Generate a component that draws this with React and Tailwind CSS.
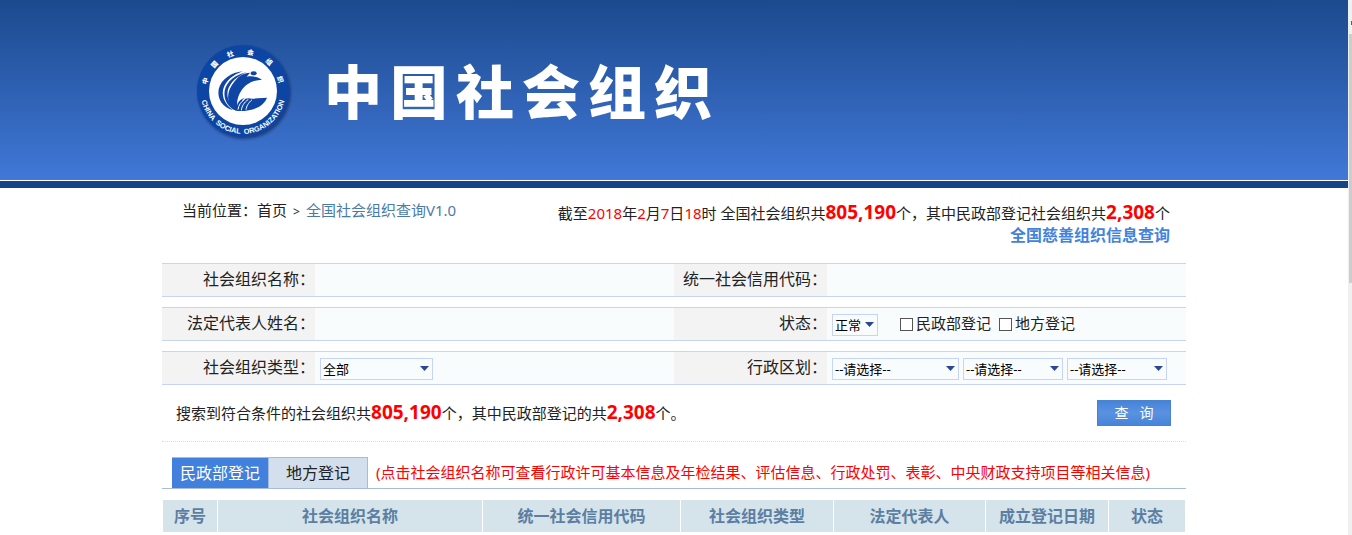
import { useState } from "react";

const columns = [
  { title: "序号", width: "w-[54px]" },
  { title: "社会组织名称", width: "w-[264px]" },
  { title: "统一社会信用代码", width: "w-[197px]" },
  { title: "社会组织类型", width: "w-[152px]" },
  { title: "法定代表人", width: "w-[151px]" },
  { title: "成立登记日期", width: "w-[122px]" },
  { title: "状态", width: "w-[76px]" },
];

const ringChars = [
  { char: "中", angle: -75 },
  { char: "国", angle: -47 },
  { char: "社", angle: -19 },
  { char: "会", angle: 11 },
  { char: "组", angle: 42 },
  { char: "织", angle: 73 },
];

const Logo = () => (
  <svg viewBox="0 0 300 300" className="size-[100px] shrink-0" role="img" aria-label="中国社会组织">
    <defs>
      <path id="ring" d="M16 120 A127 127 0 1 0 266 120" />
      <filter id="shadow" x="-10%" y="-10%" width="125%" height="125%">
        <feDropShadow dx="4" dy="5" stdDeviation="4" floodColor="#0b2350" floodOpacity="0.7" />
      </filter>
    </defs>
    <circle cx="141" cy="141" r="138" fill="#0f45a4" filter="url(#shadow)" />
    <circle cx="141" cy="141" r="102" fill="#fff" />
    {ringChars.map(({ char, angle }) => (
      <text
        key={char}
        x="141"
        y="31"
        fontSize="20"
        textAnchor="middle"
        fill="#fff"
        transform={`rotate(${angle} 141 141)`}
        className="font-black"
      >
        {char}
      </text>
    ))}
    <text fontSize="22" fill="#fff" textAnchor="middle" fontFamily="Liberation Sans, sans-serif" className="font-bold">
      <textPath href="#ring" startOffset="50%">
        CHINA&#8194;SOCIAL&#8194;ORGANIZATION
      </textPath>
    </text>
    <g fill="#0f45a4">
      <ellipse cx="173" cy="88" rx="9" ry="6" />
      {/* dolphin */}
      <path d="M198 107 C180 96 166 96 152 98 L162 86 C142 86 126 98 116 112 C98 134 90 158 102 182 C108 194 116 200 126 201 C118 172 128 144 150 124 C164 112 180 108 198 107 Z" />
      {/* waves */}
      <path d="M140 82 C106 85 75 106 68 136 C63 166 80 191 112 199 C90 184 77 162 81 138 C88 110 112 92 140 82 Z" />
      <path d="M153 84 C118 92 92 112 86 140 C82 167 96 191 122 201 C102 184 91 162 95 140 C102 114 124 96 153 84 Z" />
      <path d="M124 201 C118 184 128 166 147 161 C141 165 139 168 138 171 C150 160 160 162 168 164 L213 161 C204 184 176 203 124 201 Z" />
    </g>
    <g fill="none" stroke="#fff" strokeWidth="3">
      <path d="M126 197 C128 183 134 174 146 166" />
      <path d="M136 199 C138 185 144 176 157 166" />
      <path d="M150 197 C152 186 156 178 168 167" />
    </g>
  </svg>
);

const Select = ({ label, options, className }) => (
  <span className={`relative inline-flex h-[22px] ${className}`}>
    <select
      aria-label={label}
      className="w-full appearance-none border border-[#c6d5f3] bg-[#f8fcfd] pl-0.5 text-[13px] leading-5 text-black"
    >
      {options.map((option) => (
        <option key={option}>{option}</option>
      ))}
    </select>
    <svg viewBox="0 0 9 5" className="pointer-events-none absolute top-2 right-1 h-[5px] w-[9px]" aria-hidden="true">
      <path d="M0 0H9L4.5 5Z" fill="#2b4697" />
    </svg>
  </span>
);

const Row = ({ children }) => (
  <div className="grid h-[34px] grid-cols-[153fr_359fr_153fr_359fr] border-y border-[#c6d5f3] bg-[#f8fcfd]">
    {children}
  </div>
);

const Label = ({ htmlFor, children }) => (
  <label htmlFor={htmlFor} className="bg-[#f3f3f3] text-right text-base leading-[30px] whitespace-nowrap">
    {children}
  </label>
);

const Check = ({ children }) => (
  <label className="flex items-center gap-[3px] leading-[30px]">
    <input type="checkbox" className="mt-0.5 size-[13px] appearance-none border border-[#555] bg-white checked:bg-[#4180dc]" />
    {children}
  </label>
);

const Count = ({ children }) => <b className="text-[19px] leading-none text-[#f00]">{children}</b>;

const Red = ({ children }) => <span className="text-[#f00]">{children}</span>;

const App = () => {
  const [tab, setTab] = useState("部");

  const tabClass = (name) =>
    name === tab ? "bg-[#4180dc] text-white" : "bg-[#d3dfed] text-[#222]";

  return (
    <div
      lang="zh-CN"
      className="flex min-h-screen bg-white font-['Noto_Sans','Noto_Sans_CJK_SC',sans-serif] text-[15px] text-[#222]"
    >
      <div className="min-w-0 flex-1">
        <header className="border-b-[7px] border-[#154588]">
          <div className="h-[181px] border-b border-white bg-linear-to-b from-[#1c4a8e] to-[#4178d8]">
            <div className="mx-auto flex max-w-[1024px] items-start pt-11 pl-[34px]">
              <Logo />
              <h1 className="mt-2 ml-7 flex gap-2 text-[58px] leading-[80px] font-black text-white">
                {[..."中国社会组织"].map((char) => (
                  <span key={char}>{char}</span>
                ))}
              </h1>
            </div>
          </div>
        </header>

        <main className="mx-auto max-w-[1024px]">
          <div className="flex justify-between pt-[11px] pr-4 pl-5">
            <nav className="leading-[22px]">
              当前位置：<a href="#home">首页</a>
              <span className="mx-1.5 text-xs">&gt;</span>
              <a href="#search" className="text-[#4a7ba8]">全国社会组织查询V1.0</a>
            </nav>
            <div className="pt-[3px] text-right leading-[22px]">
              <p>
                截至<Red>2018</Red>年<Red>2</Red>月<Red>7</Red>日<Red>18</Red>时 全国社会组织共
                <Count>805,190</Count>个，其中民政部登记社会组织共<Count>2,308</Count>个
              </p>
              <a href="#charity" className="block text-base leading-[22px] font-bold text-[#4283dc]">
                全国慈善组织信息查询
              </a>
            </div>
          </div>

          <form onSubmit={(e) => e.preventDefault()}>
            <div className="mt-[17px] flex flex-col gap-2.5">
              <Row>
                <Label htmlFor="name">社会组织名称：</Label>
                <input id="name" type="text" className="min-w-0 px-1 outline-none" />
                <Label htmlFor="code">统一社会信用代码：</Label>
                <input id="code" type="text" className="min-w-0 px-1 outline-none" />
              </Row>
              <Row>
                <Label htmlFor="person">法定代表人姓名：</Label>
                <input id="person" type="text" className="min-w-0 px-1 outline-none" />
                <Label>状态：</Label>
                <div className="flex items-start pl-[5px]">
                  <Select label="状态" options={["正常", "撤销", "注销"]} className="mt-1.5 mr-[22px] w-[46px]" />
                  <div className="flex gap-2">
                    <Check>民政部登记</Check>
                    <Check>地方登记</Check>
                  </div>
                </div>
              </Row>
              <Row>
                <Label>社会组织类型：</Label>
                <div className="flex pt-1.5 pl-[5px]">
                  <Select label="社会组织类型" options={["全部", "社会团体", "基金会"]} className="w-[113px]" />
                </div>
                <Label>行政区划：</Label>
                <div className="flex gap-1 pt-1.5 pl-[5px]">
                  <Select label="省" options={["--请选择--"]} className="w-[127px]" />
                  <Select label="市" options={["--请选择--"]} className="w-[100px]" />
                  <Select label="区县" options={["--请选择--"]} className="w-[100px]" />
                </div>
              </Row>
            </div>

            <div className="flex items-start justify-between border-b border-dotted border-[#ddd] pt-[15px] pr-[15px] pb-[15px] pl-3.5">
              <p className="leading-[26px]">
                搜索到符合条件的社会组织共<Count>805,190</Count>个，其中民政部登记的共<Count>2,308</Count>个。
              </p>
              <button
                type="submit"
                className="h-[26px] w-[74px] border border-[#4a82cc] bg-linear-to-b from-[#4584da] via-[#5a92df] to-[#4584da] text-sm leading-[22px] text-white"
              >
                查&nbsp;&nbsp;&nbsp;询
              </button>
            </div>
          </form>

          <div className="mt-[15px] flex border-b border-[#a6bcd9] pl-2.5">
            <button
              type="button"
              onClick={() => setTab("部")}
              className={`h-[31px] w-[97px] border-t border-r border-[#a6bcd9] text-base ${tabClass("部")}`}
            >
              民政部登记
            </button>
            <button
              type="button"
              onClick={() => setTab("地方")}
              className={`h-[31px] w-[99px] border-t border-r border-[#a6bcd9] text-base ${tabClass("地方")}`}
            >
              地方登记
            </button>
            <p className="pl-2 leading-[31px] text-[#f00]">
              (点击社会组织名称可查看行政许可基本信息及年检结果、评估信息、行政处罚、表彰、中央财政支持项目等相关信息)
            </p>
          </div>

          <table className="mt-2.5 w-full table-fixed border-separate border-spacing-px text-base text-[#5c7ea3]">
            <thead>
              <tr>
                {columns.map((column) => (
                  <th key={column.title} className={`h-8 bg-[#d5e4ea] p-0 leading-8 font-bold ${column.width}`}>
                    {column.title}
                  </th>
                ))}
              </tr>
            </thead>
          </table>
        </main>
      </div>

      {/* scroll rail */}
      <div className="w-1 shrink-0 bg-[#f0f0f0] pt-[21px] pl-px" aria-hidden="true">
        <div className="ml-auto h-1 w-px bg-[#606060]" />
        <div className="mt-[9px] h-[249px] bg-[#cdcdcd]" />
      </div>
    </div>
  );
};

export default App;
